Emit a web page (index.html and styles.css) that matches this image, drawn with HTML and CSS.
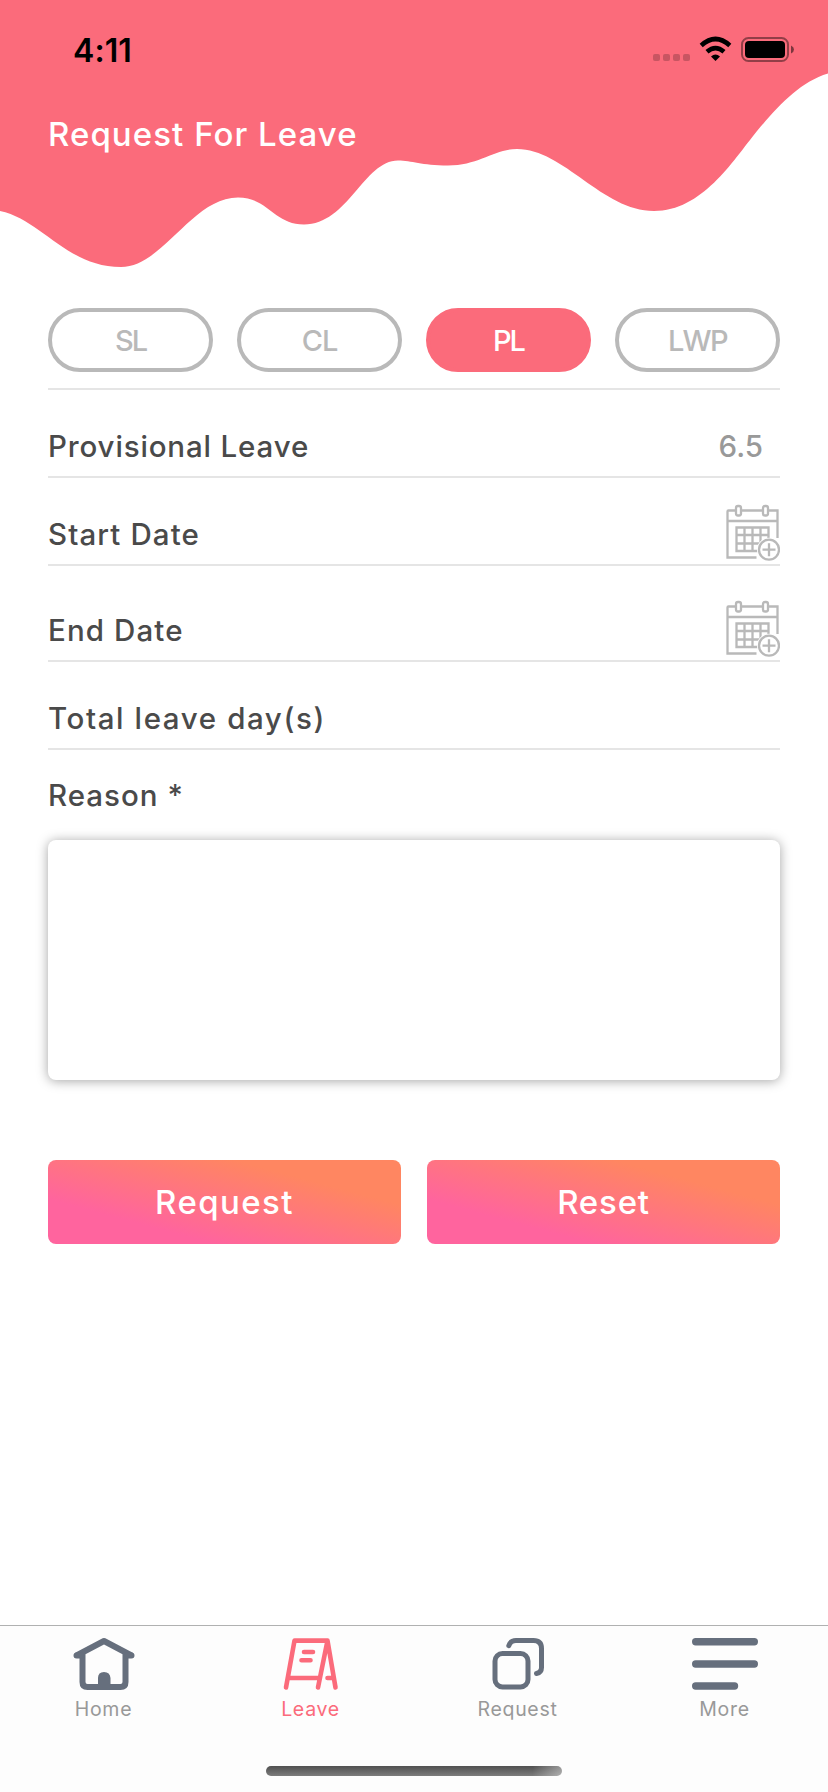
FILE: index.html
```html
<!DOCTYPE html>
<html lang="en">
<head>
<meta charset="utf-8">
<title>Request For Leave</title>
<link rel="stylesheet" href="styles.css">
</head>
<body>
<div class="screen">
  <header class="header">
    <svg class="wave" viewBox="0 0 828 280" aria-hidden="true">
      <path d="M0 0H828V73.500C800 82 779 105 757 131C732 162 702 211 654 211C602 211 564 149 517 149C494 149 479 165.500 448 165.500C421 165.500 412 160.500 398 160.500C364 160.500 348 224.500 304 224.500C274 224.500 268 197.500 238 197.500C192 197.500 163 267 121 267C67 267 42 220 0 211Z"/>
    </svg>
    <div class="status">
      <span class="time">4:11</span>
      <svg class="indicators" width="144" height="28" viewBox="0 0 144 28">
        <g fill="#000" opacity=".2"><rect x="1" y="18" width="7" height="7" rx="2"/><rect x="11" y="18" width="7" height="7" rx="2"/><rect x="21" y="18" width="7" height="7" rx="2"/><rect x="31" y="18" width="7" height="7" rx="2"/></g>
        <path d="M49.200 9.500Q63.500-3.500 77.800 9.500M55 15.700Q63.500 8.500 72 15.700" fill="none" stroke="#000" stroke-width="4.600"/>
        <path d="M59 20.500Q63.500 16.500 68 20.500L63.500 25Z"/>
        <rect x="90" y="2" width="46" height="23" rx="6.500" fill="none" stroke="#000" stroke-opacity=".42" stroke-width="2"/>
        <rect x="93" y="5" width="40" height="17" rx="4"/>
        <path d="M139 9.500Q142 11 142 13.500T139 17.500Z" opacity=".5"/>
      </svg>
    </div>
    <h1 class="title">Request For Leave</h1>
  </header>

  <main class="form">
    <div class="types">
      <button class="pill pill-sl">SL</button>
      <button class="pill pill-cl">CL</button>
      <button class="pill pill-active">PL</button>
      <button class="pill pill-lwp">LWP</button>
    </div>
    <div class="row"><span class="label provisional">Provisional Leave</span><span class="value">6.5</span></div>
    <div class="row"><span class="label date">Start Date</span>
      <svg class="calendar" width="56" height="58" viewBox="0 0 56 58"><use href="#calendar"/></svg></div>
    <div class="row row-tall"><span class="label date">End Date</span>
      <svg class="calendar" width="56" height="58" viewBox="0 0 56 58"><use href="#calendar"/></svg></div>
    <div class="row"><span class="label total">Total leave day(s)</span></div>
    <label class="label reason" for="reason">Reason *</label>
    <textarea id="reason" class="reason-box"></textarea>
    <div class="actions">
      <button class="action request">Request</button>
      <button class="action reset">Reset</button>
    </div>
  </main>

  <nav class="tabs">
    <a class="tab"><svg width="62" height="54" viewBox="0 0 62 54" fill="none" stroke="#666f7d" stroke-width="6" stroke-linecap="round" stroke-linejoin="round"><path d="M3.500 18.500 31 4 58.500 18.500M9.500 17V45Q9.500 50 14.500 50H47.500Q52.500 50 52.500 45V17" stroke-linecap="butt"/><path d="M3.500 18.500H8M58.500 18.500H54"/><path d="M25 50V41Q25 35 31 35T37.500 41V50Z" fill="#666f7d" stroke="none"/></svg><span>Home</span></a>
    <a class="tab tab-active"><svg width="56" height="54" viewBox="1.500 0 56 54" fill="none" stroke="#fb6b7b" stroke-width="4.600" stroke-linecap="round" stroke-linejoin="round"><path d="M4.500 50.500 13 3.600H46L36.500 50.500M46 3.600 54 50.500M8 41H37M46 41H51"/><path d="M22.500 15H31.500M20 23.300H29"/></svg><span>Leave</span></a>
    <a class="tab"><svg width="54" height="54" viewBox="0 0 54 54" fill="none" stroke="#666f7d" stroke-width="5" stroke-linecap="round" stroke-linejoin="round"><rect x="4" y="16.500" width="33" height="33.500" rx="7.500"/><path d="M17.800 8.700Q19.500 3.500 25 3.500H42.500Q50.500 3.500 50.500 11.500V30.500Q50.500 35.500 45.500 36.500"/></svg><span>Request</span></a>
    <a class="tab"><svg width="68" height="54" viewBox="0 0 68 54" fill="none" stroke="#666f7d" stroke-width="7.400" stroke-linecap="round"><path d="M4.700 4.700H63.300M4.700 27H63.300M4.700 49H43.500"/></svg><span>More</span></a>
    <span class="home-indicator"></span>
  </nav>
</div>

<svg class="defs" aria-hidden="true">
  <symbol id="calendar" viewBox="0 0 56 58">
    <g fill="none" stroke="#b9b9b9" stroke-width="2.300">
      <path d="M11 6.500H4.500Q3.500 6.500 3.500 7.500V53.500H32.500M18 6.500H38M45 6.500H53.500V34M3.500 17H53.500"/>
      <rect x="12" y="2" width="5" height="9.500" rx="2"/><rect x="39" y="2" width="5" height="9.500" rx="2"/>
      <path d="M34 47H12.500V23.500H44.500V34M12.500 31H44.500M12.500 39.500H36M20.500 23.500V47M28.500 23.500V47M36.500 23.500V38"/>
      <circle cx="45" cy="45.700" r="12" fill="#fff" stroke="none"/>
      <circle cx="45" cy="45.700" r="10"/><path d="M38.500 45.700H51.500M45 39.200V52.200"/>
    </g>
  </symbol>
</svg>
</body>
</html>
```
FILE: styles.css
```css
* { box-sizing: border-box; }
body { margin: 0; background: #fff; font-family: Inter, "Open Sans", sans-serif; }
button { font: inherit; border: 0; padding: 0; }
.defs { display: none; }
.screen { width: 828px; height: 1792px; display: flex; flex-direction: column; overflow: hidden; }

.header { position: relative; height: 308px; flex: none; padding: 36px 32px 0 48px; }
.wave { position: absolute; inset: 0 0 auto; width: 828px; height: 280px; fill: #fb6b7b; }
.status { position: relative; display: flex; justify-content: space-between; height: 28px; padding-left: 25px; }
.time { font-size: 32px; line-height: 29px; font-weight: 600; letter-spacing: .1px; }
.indicators { display: block; }
.title { position: relative; margin: 50px 0 0; font-size: 33px; line-height: 40px; font-weight: 500; color: #fff; letter-spacing: 1.05px; white-space: nowrap; }

.form { padding: 0 48px; flex: 1; display: flex; flex-direction: column; }
.types { display: grid; grid-template-columns: repeat(4, 1fr); gap: 24px; padding-bottom: 16px; border-bottom: 2px solid #e5e5e5; }
.pill { height: 64px; padding-top: 1px; border: 4px solid #b9b9b9; border-radius: 32px; background: #fff; color: #b9b9b9; font-size: 29px; font-weight: 500; line-height: 55px; }
.pill-sl { letter-spacing: -2px; }
.pill-cl { letter-spacing: -1px; }
.pill-lwp { letter-spacing: -1.5px; }
.pill-active { background: #fb6b7b; border-color: #fb6b7b; color: #fff; letter-spacing: -2px; }

.row { height: 88px; flex: none; display: flex; align-items: flex-end; justify-content: space-between; border-bottom: 2px solid #e5e5e5; }
.row-tall { height: 96px; }
.label { font-size: 29.5px; line-height: 36px; font-weight: 500; color: #4a4a4a; white-space: nowrap; }
.row .label, .value { margin-bottom: 12px; }
.provisional { letter-spacing: .85px; }
.date { letter-spacing: 1.1px; }
.total { letter-spacing: 1.6px; }
.value { margin-right: 17px; font-size: 29.5px; line-height: 36px; font-weight: 500; color: #999; }
.calendar { flex: none; margin-bottom: 2px; }
.reason { margin-top: 27px; letter-spacing: 1px; }
.reason-box { display: block; width: 100%; height: 240px; margin: 27px 0 0; border: 0; border-radius: 8px; background: #fff; resize: none; box-shadow: 0 1px 12px rgba(0, 0, 0, .36); }

.actions { display: grid; grid-template-columns: 1fr 1fr; gap: 26px; margin-top: 80px; }
.action { height: 84px; border-radius: 8px; background: linear-gradient(15deg, #ff649e 25%, #ff8661 75%); color: #fff; font-size: 33px; font-weight: 500; line-height: 84px; }
.request { letter-spacing: 1.4px; }
.reset { letter-spacing: .8px; }

.tabs { position: relative; height: 167px; flex: none; display: grid; grid-template-columns: repeat(4, 1fr); padding-top: 11px; border-top: 1px solid #b0b1b1; background: #fdfdfd; }
.tab { display: flex; flex-direction: column; align-items: center; color: #999; font-size: 19.500px; line-height: 24px; font-weight: 400; letter-spacing: .7px; gap: 6px; }
.tab-active { color: #fb6b7b; }
.home-indicator { position: absolute; left: 266px; bottom: 16px; width: 296px; height: 10px; border-radius: 5px; background: linear-gradient(90deg, transparent 90%, rgba(255, 255, 255, .4)), linear-gradient(#505050, #7c7c7c); }
```
